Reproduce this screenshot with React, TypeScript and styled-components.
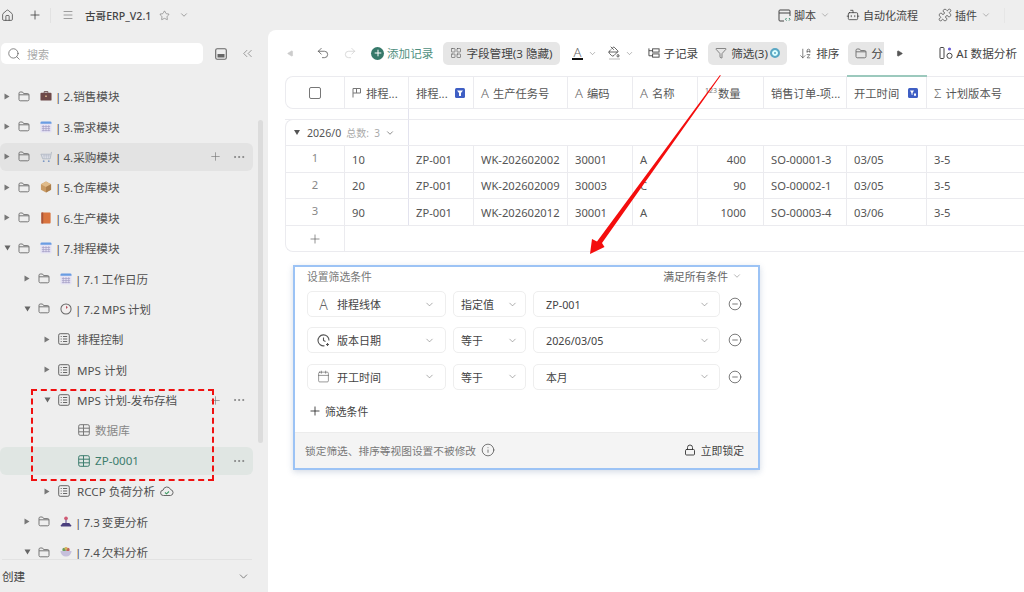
import React, { FC, ReactNode } from 'react'
import styled, { createGlobalStyle } from 'styled-components'
import {
	ArrowDownAZ,
	Bot,
	Calendar,
	ChevronDown,
	ChevronsLeft,
	CircleMinus,
	Ellipsis,
	Funnel,
	House,
	Info,
	LayoutGrid,
	Lock,
	Menu,
	PaintBucket,
	Play,
	Plus,
	Puzzle,
	Redo2,
	Search,
	Star,
	Undo2,
} from 'lucide-react'

const COLUMNS = '59px 64px 65px 94px 65px 65px 66px 83px 80px 120px'

interface TreeItem {
	label: string
	level: number
	kind: 'folder' | 'doc' | 'table'
	caret?: 'right' | 'down'
	emoji?: EmojiName
	state?: 'hover' | 'active' | 'actions'
	muted?: boolean
	cloud?: boolean
}

type EmojiName = 'case' | 'calendar' | 'cart' | 'box' | 'book' | 'clock' | 'joystick' | 'bowl'

const tree: TreeItem[] = [
	{ label: '| 2.销售模块', level: 0, kind: 'folder', caret: 'right', emoji: 'case' },
	{ label: '| 3.需求模块', level: 0, kind: 'folder', caret: 'right', emoji: 'calendar' },
	{ label: '| 4.采购模块', level: 0, kind: 'folder', caret: 'right', emoji: 'cart', state: 'hover' },
	{ label: '| 5.仓库模块', level: 0, kind: 'folder', caret: 'right', emoji: 'box' },
	{ label: '| 6.生产模块', level: 0, kind: 'folder', caret: 'right', emoji: 'book' },
	{ label: '| 7.排程模块', level: 0, kind: 'folder', caret: 'down', emoji: 'calendar' },
	{ label: '| 7.1 工作日历', level: 1, kind: 'folder', caret: 'right', emoji: 'calendar' },
	{ label: '| 7.2 MPS 计划', level: 1, kind: 'folder', caret: 'down', emoji: 'clock' },
	{ label: '排程控制', level: 2, kind: 'doc', caret: 'right' },
	{ label: 'MPS 计划', level: 2, kind: 'doc', caret: 'right' },
	{ label: 'MPS 计划-发布存档', level: 2, kind: 'doc', caret: 'down', state: 'actions' },
	{ label: '数据库', level: 3, kind: 'table', muted: true },
	{ label: 'ZP-0001', level: 3, kind: 'table', state: 'active' },
	{ label: 'RCCP 负荷分析', level: 2, kind: 'doc', caret: 'right', cloud: true },
	{ label: '| 7.3 变更分析', level: 1, kind: 'folder', caret: 'right', emoji: 'joystick' },
	{ label: '| 7.4 欠料分析', level: 1, kind: 'folder', caret: 'down', emoji: 'bowl' },
]

const rows = [
	['1', '10', 'ZP-001', 'WK-202602002', '30001', 'A', '400', 'SO-00001-3', '03/05', '3-5'],
	['2', '20', 'ZP-001', 'WK-202602009', '30003', 'C', '90', 'SO-00002-1', '03/05', '3-5'],
	['3', '90', 'ZP-001', 'WK-202602012', '30001', 'A', '1000', 'SO-00003-4', '03/06', '3-5'],
]

const filters = [
	{ icon: 'text', field: '排程线体', op: '指定值', value: 'ZP-001' },
	{ icon: 'clock', field: '版本日期', op: '等于', value: '2026/03/05' },
	{ icon: 'calendar', field: '开工时间', op: '等于', value: '本月' },
]

const Emoji: FC<{ name: EmojiName }> = ({ name }) => {
	switch (name) {
		case 'case':
			return (
				<svg width="12" height="12" viewBox="0 0 13 13">
					<path d="M4.5 3V1.8h4V3" fill="none" stroke="#5b3d3d" />
					<rect x="0.5" y="3" width="12" height="8.5" rx="1" fill="#6d4848" />
					<rect x="5.5" y="6" width="2" height="1.5" fill="#d9b48a" />
				</svg>
			)
		case 'calendar':
			return (
				<svg width="12" height="12" viewBox="0 0 13 13">
					<rect x="0.5" y="0.5" width="12" height="12" rx="1.5" fill="#e6e3f4" />
					<path d="M0.5 2a1.500 1.500 0 0 1 1.500-1.500h9A1.500 1.500 0 0 1 12.500 2v1h-12z" fill="#6a9de2" />
					<path d="M3.500 4.500v6.500M6.500 4.500v6.500M9.500 4.500v6.500M2 6h9M2 8.200h9M2 10.400h9" stroke="#a5a0c6" strokeWidth="0.8" />
				</svg>
			)
		case 'cart':
			return (
				<svg width="12" height="12" viewBox="0 0 13 13">
					<path d="M12.500 1l-1.500 7.500H3L1 3.500h10.500" fill="#dcdfe6" stroke="#a8b0bd" strokeWidth="0.8" />
					<path d="M3 5.200h8M4.500 3.500v5M7 3.500v5M9.300 3.500v5" stroke="#b6bcc8" strokeWidth="0.6" />
					<circle cx="4" cy="11" r="1" fill="#7d98c4" />
					<circle cx="9.500" cy="11" r="1" fill="#7d98c4" />
				</svg>
			)
		case 'box':
			return (
				<svg width="12" height="12" viewBox="0 0 13 13">
					<path d="M6.500 0.500l5.500 3v6l-5.500 3-5.500-3v-6z" fill="#c99a63" />
					<path d="M1 3.500l5.500 3 5.500-3-5.500-3z" fill="#e0bb8a" />
					<path d="M6.500 6.500v6l5.500-3v-6z" fill="#ad7f4c" />
				</svg>
			)
		case 'book':
			return (
				<svg width="12" height="12" viewBox="0 0 13 13">
					<rect x="1.500" y="0.500" width="10" height="12" rx="1" fill="#d9743f" />
					<rect x="1.500" y="0.500" width="2" height="12" fill="#a9553a" />
				</svg>
			)
		case 'clock':
			return (
				<svg width="12" height="12" viewBox="0 0 13 13">
					<circle cx="6.500" cy="6.500" r="5.500" fill="#f1eeee" stroke="#666" strokeWidth="1.100" />
					<path d="M6.500 6.500V3l2 1.500z" fill="#b9505b" />
				</svg>
			)
		case 'joystick':
			return (
				<svg width="12" height="12" viewBox="0 0 13 13">
					<circle cx="6.500" cy="2.500" r="2" fill="#d15a73" />
					<rect x="5.800" y="4" width="1.400" height="4" fill="#776a9c" />
					<path d="M1 10l2-2.500h7l2 2.500v1.500H1z" fill="#4a3f7d" />
				</svg>
			)
		default:
			return (
				<svg width="12" height="12" viewBox="0 0 13 13">
					<circle cx="4.500" cy="4" r="2" fill="#6a9c5c" />
					<circle cx="8.500" cy="4" r="2" fill="#c0615c" />
					<circle cx="6.500" cy="2.800" r="1.600" fill="#d6b45a" />
					<path d="M0.500 5.500h12a6 6 0 0 1-12 0z" fill="#c6c0dc" />
				</svg>
			)
	}
}

const FolderIcon = () => (
	<svg width="12" height="11" viewBox="0 0 12 11" fill="none" stroke="#777" strokeWidth="1">
		<path d="M1 2.200c0-.7.5-1.200 1.200-1.200h2.300l1.200 1.600h4.100c.7 0 1.200.5 1.200 1.200v4.800c0 .7-.5 1.200-1.200 1.200H2.200c-.7 0-1.200-.5-1.200-1.200z" />
		<path d="M1 3.800h10" />
	</svg>
)

const DocIcon = () => (
	<svg width="12" height="12" viewBox="0 0 12 12" fill="none" stroke="#666" strokeWidth="1">
		<rect x="0.700" y="0.700" width="10.600" height="10.600" rx="1.500" />
		<path d="M5 3.500h4.200M5 6h4.200M5 8.500h4.200M2.700 3.500h1M2.700 6h1M2.700 8.500h1" />
	</svg>
)

const TableIcon: FC<{ color: string }> = ({ color }) => (
	<svg width="12" height="12" viewBox="0 0 12 12" fill="none" stroke={color} strokeWidth="1">
		<rect x="0.700" y="0.700" width="10.600" height="10.600" rx="1.500" />
		<path d="M0.700 4.200h10.600M0.700 7.800h10.600M5.500 0.700v10.600" />
	</svg>
)

const CloudCheckIcon = () => (
	<svg width="14" height="12" viewBox="0 0 14 12" fill="none">
		<path d="M3.500 10.500a2.700 2.700 0 0 1-.4-5.400 3.900 3.900 0 0 1 7.500-.5 3 3 0 0 1 0 5.900z" stroke="#666" />
		<path d="M5 7.500l1.500 1.300L9 6.500" stroke="#3d9a62" strokeWidth="1.100" />
	</svg>
)

const PanelIcon = () => (
	<svg width="12" height="12" viewBox="0 0 12 12">
		<rect x="0.700" y="0.700" width="10.600" height="10.600" rx="1.500" fill="none" stroke="#666" strokeWidth="1.100" />
		<rect x="2.500" y="6" width="7" height="3.500" fill="#666" />
	</svg>
)

const ScriptIcon = () => (
	<svg width="13" height="13" viewBox="0 0 13 13" fill="none" stroke="#444" strokeWidth="1">
		<path d="M6 12H2a1 1 0 0 1-1-1V2a1 1 0 0 1 1-1h9a1 1 0 0 1 1 1v5" />
		<path d="M1 4h11" />
		<path d="M8.500 9l-1 1.300 1 1.300M11 9l1 1.300-1 1.300" stroke="#3d8a6e" />
	</svg>
)

const SubRecordIcon = () => (
	<svg width="12" height="12" viewBox="0 0 13 13" fill="none" stroke="#444" strokeWidth="1">
		<path d="M1 1.500v8h4" />
		<path d="M1 4h4" />
		<rect x="5" y="2" width="7" height="3.500" />
		<rect x="5" y="7.500" width="7" height="3.500" />
	</svg>
)

const AiIcon = () => (
	<svg width="14" height="14" viewBox="0 0 14 14" fill="none" stroke="#444" strokeWidth="1">
		<rect x="1" y="1.500" width="4" height="11" rx="1" />
		<circle cx="10.500" cy="9.800" r="2.600" />
		<circle cx="10.500" cy="3" r="1.600" fill="#6b5fd6" stroke="none" />
	</svg>
)

const FlagIcon = () => (
	<svg width="10" height="11" viewBox="0 0 10 11" fill="none" stroke="#777" strokeWidth="1">
		<path d="M1 10.500V1.500h7.500v4.500H1M4.500 1.500V6" />
	</svg>
)

const ClockSparkIcon = () => (
	<svg width="13" height="13" viewBox="0 0 13 13" fill="none" stroke="#555" strokeWidth="1.100">
		<path d="M7.500 11.800A5.500 5.500 0 1 1 12 6.500" />
		<path d="M6.500 3.500v3l2 1" />
		<path d="M10.500 9v3M9 10.500h3" />
	</svg>
)

const MarkerIcon: FC<{ $time?: boolean }> = ({ $time }) => (
	<svg width="10" height="10" viewBox="0 0 10 10">
		<rect width="10" height="10" rx="1.500" fill="#3f5fc4" />
		{$time ? <path d="M2 2.500h4L4.500 5v2L3.500 6.500V5z M6 5.500h2v2.200H6z" fill="#fff" /> : <path d="M2 2.500h6L6 5v3H4V5z" fill="#fff" />}
	</svg>
)

const Caret: FC<{ dir?: 'right' | 'down' }> = ({ dir }) => (
	<CaretSlot>
		{dir === 'right' && (
			<svg width="6" height="7" viewBox="0 0 6 7">
				<path d="M0.500 0.500L5.500 3.500L0.500 6.500z" fill="#777" />
			</svg>
		)}
		{dir === 'down' && (
			<svg width="7" height="6" viewBox="0 0 7 6">
				<path d="M0.500 0.500H6.500L3.500 5.500z" fill="#666" />
			</svg>
		)}
	</CaretSlot>
)

const TreeRow: FC<{ item: TreeItem }> = ({ item }) => (
	<Row $level={item.level} $state={item.state}>
		<Caret dir={item.caret} />
		<NodeIcon>
			{item.kind === 'folder' && <FolderIcon />}
			{item.kind === 'doc' && <DocIcon />}
			{item.kind === 'table' && <TableIcon color={item.state === 'active' ? '#3d7d6e' : '#777'} />}
		</NodeIcon>
		{item.emoji && (
			<EmojiSlot>
				<Emoji name={item.emoji} />
			</EmojiSlot>
		)}
		<RowLabel $state={item.state} $muted={item.muted} $emoji={!!item.emoji} $table={item.kind === 'table'}>
			{item.label}
		</RowLabel>
		{item.cloud && (
			<CloudSlot>
				<CloudCheckIcon />
			</CloudSlot>
		)}
		{item.state && (
			<RowActions>
				{item.state !== 'active' && <Plus size={13} strokeWidth={1.2} />}
				<Ellipsis size={14} strokeWidth={1.4} />
			</RowActions>
		)}
	</Row>
)

const HeaderCell: FC<{ icon?: ReactNode; marker?: ReactNode; accent?: boolean; children: ReactNode }> = ({
	icon,
	marker,
	accent,
	children,
}) => (
	<HeadCell $accent={accent}>
		{icon}
		<HeadText>{children}</HeadText>
		{marker && <MarkerSlot>{marker}</MarkerSlot>}
	</HeadCell>
)

const Select: FC<{ width: number; pad: number; icon?: ReactNode; children: ReactNode }> = ({ width, pad, icon, children }) => (
	<SelectBox $width={width} $pad={pad}>
		{icon && <SelectIcon>{icon}</SelectIcon>}
		<SelectText>{children}</SelectText>
		<ChevronDown size={11} strokeWidth={1.3} color="#777" />
	</SelectBox>
)

const fieldIcon = (name: string) => {
	if (name === 'text') return <FieldA>A</FieldA>
	if (name === 'clock') return <ClockSparkIcon />
	return <Calendar size={13} strokeWidth={1.1} color="#555" />
}

const App: FC = () => (
	<>
		<GlobalStyle />
		<Page>
			<TopBar>
				<TopLeft>
					<House size={13} strokeWidth={1.4} color="#444" />
					<TopPlus>
						<Plus size={14} strokeWidth={1.3} color="#333" />
					</TopPlus>
					<TopDivider />
					<Menu size={12} strokeWidth={1.2} color="#666" />
					<TopTitle>古哥ERP_V2.1</TopTitle>
					<Star size={11} strokeWidth={1.2} color="#666" />
					<TopChevron>
						<ChevronDown size={10} strokeWidth={1.4} color="#666" />
					</TopChevron>
				</TopLeft>
				<TopRight>
					<TopItem $width={68}>
						<ScriptIcon />
						<span>脚本</span>
						<ChevronDown size={10} strokeWidth={1.2} color="#777" />
					</TopItem>
					<TopItem $width={92}>
						<Bot size={14} strokeWidth={1.3} color="#333" />
						<span>自动化流程</span>
					</TopItem>
					<TopItem $width={66}>
						<Puzzle size={14} strokeWidth={1.1} color="#333" />
						<span>插件</span>
						<ChevronDown size={10} strokeWidth={1.2} color="#777" />
					</TopItem>
					<TopEndRule />
				</TopRight>
			</TopBar>
			<Body>
				<Sidebar>
					<SearchRow>
						<SearchBox>
							<Search size={14} strokeWidth={1.2} color="#555" />
							<SearchHint>搜索</SearchHint>
						</SearchBox>
						<SearchTool $ml={12}>
							<PanelIcon />
						</SearchTool>
						<SearchTool $ml={13}>
							<ChevronsLeft size={15} strokeWidth={1} color="#666" />
						</SearchTool>
					</SearchRow>
					<Tree>
						{tree.map((item) => (
							<TreeRow key={item.label} item={item} />
						))}
					</Tree>
					<SideFooter>
						<span>创建</span>
						<ChevronDown size={13} strokeWidth={1.3} color="#555" />
					</SideFooter>
					<ScrollThumb />
				</Sidebar>
				<Main>
					<Toolbar>
						<ToolSlot $ml={19}>
							<Play size={7} fill="#ccc" color="#ccc" style={{ transform: 'rotate(180deg)' }} />
						</ToolSlot>
						<ToolSlot $ml={22}>
							<Undo2 size={14} strokeWidth={1.2} color="#444" />
						</ToolSlot>
						<ToolSlot $ml={13}>
							<Redo2 size={14} strokeWidth={1.2} color="#ccc" />
						</ToolSlot>
						<AddRecord>
							<AddDot>
								<Plus size={10} strokeWidth={2.4} color="#fff" />
							</AddDot>
							添加记录
						</AddRecord>
						<ToolButton $active $ml={10} $width={117}>
							<LayoutGrid size={12} strokeWidth={1.2} color="#555" />
							字段管理(3 隐藏)
						</ToolButton>
						<ColorTool $ml={11}>
							<ColorGlyph>
								<TypeA>A</TypeA>
								<ColorBar $color="#111" />
							</ColorGlyph>
							<ChevronDown size={9} strokeWidth={1.4} color="#777" />
						</ColorTool>
						<ColorTool $ml={11}>
							<ColorGlyph>
								<PaintBucket size={12} strokeWidth={1.5} color="#333" />
								<ColorBar $color="#ddd" />
							</ColorGlyph>
							<ChevronDown size={9} strokeWidth={1.4} color="#777" />
						</ColorTool>
						<SubRecord>
							<SubRecordIcon />
							子记录
						</SubRecord>
						<ToolButton $active $ml={10} $width={79}>
							<Funnel size={12} strokeWidth={1.2} color="#444" />
							<span>筛选(3)</span>
							<FilterBadge />
						</ToolButton>
						<ToolButton $ml={5} $width={54}>
							<ArrowDownAZ size={13} strokeWidth={1.2} color="#444" />
							排序
						</ToolButton>
						<ToolButton $active $ml={2} $width={36} $clip>
							<FolderIcon />
							分
						</ToolButton>
						<ToolSlot $ml={12}>
							<Play size={7} fill="#555" color="#555" />
						</ToolSlot>
						<AiButton>
							<AiIcon />
							AI 数据分析
						</AiButton>
					</Toolbar>

					<TableWrap>
						<HeadRow>
							<CheckCell>
								<CheckBox />
							</CheckCell>
							<HeaderCell icon={<FlagIcon />}>排程...</HeaderCell>
							<HeaderCell marker={<MarkerIcon />}>排程...</HeaderCell>
							<HeaderCell icon={<TypeA>A</TypeA>}>生产任务号</HeaderCell>
							<HeaderCell icon={<TypeA>A</TypeA>}>编码</HeaderCell>
							<HeaderCell icon={<TypeA>A</TypeA>}>名称</HeaderCell>
							<HeaderCell icon={<NumberMark>123</NumberMark>}>数量</HeaderCell>
							<HeaderCell>销售订单-项...</HeaderCell>
							<HeaderCell accent marker={<MarkerIcon $time />}>
								开工时间
							</HeaderCell>
							<HeaderCell icon={<TypeA>Σ</TypeA>}>计划版本号</HeaderCell>
						</HeadRow>
						<GapRow />
						<GroupRow>
							<GroupCell>
								<svg width="6" height="5" viewBox="0 0 6 5">
									<path d="M0 0H6L3 5z" fill="#555" />
								</svg>
								<GroupDate>2026/0</GroupDate>
								<GroupCount>总数:&nbsp;&nbsp;3</GroupCount>
								<ChevronDown size={10} strokeWidth={1.6} color="#555" />
							</GroupCell>
						</GroupRow>
						{rows.map((row) => (
							<DataRow key={row[0]}>
								{row.map((value, i) => (
									<DataCell key={i} $num={i === 0} $right={i === 6} $frozen={i === 1}>
										{value}
									</DataCell>
								))}
							</DataRow>
						))}
						<AddRow>
							<AddRowCell>
								<Plus size={14} strokeWidth={1.1} color="#555" />
							</AddRowCell>
						</AddRow>
					</TableWrap>

					<FilterPanel>
						<PanelHead>
							<span>设置筛选条件</span>
							<PanelMode>
								满足所有条件
								<ChevronDown size={10} strokeWidth={1.3} color="#777" />
							</PanelMode>
						</PanelHead>
						<FilterList>
							{filters.map((f) => (
								<FilterRow key={f.field}>
									<Select width={139} pad={10} icon={fieldIcon(f.icon)}>
										{f.field}
									</Select>
									<Select width={73} pad={7}>
										{f.op}
									</Select>
									<ValueSelect $width={187} $pad={9}>
										<SelectText>{f.value}</SelectText>
										<ChevronDown size={11} strokeWidth={1.3} color="#777" />
									</ValueSelect>
									<RemoveSlot>
										<CircleMinus size={14} strokeWidth={1.2} color="#444" />
									</RemoveSlot>
								</FilterRow>
							))}
						</FilterList>
						<AddFilter>
							<Plus size={14} strokeWidth={1.4} color="#222" />
							筛选条件
						</AddFilter>
						<PanelFoot>
							<FootHint>
								锁定筛选、排序等视图设置不被修改
								<Info size={14} strokeWidth={1.2} color="#444" />
							</FootHint>
							<LockNow>
								<Lock size={12} strokeWidth={1.8} color="#333" />
								立即锁定
							</LockNow>
						</PanelFoot>
					</FilterPanel>
				</Main>
			</Body>

			<DashedMark />
			<ArrowOverlay width="1024" height="592" viewBox="0 0 1024 592">
				<path d="M720 75L720.800 75.500L602 243L604.500 247L590 254L592 239L597 241.500z" fill="#f40d0d" />
			</ArrowOverlay>
		</Page>
	</>
)

export default App

const GlobalStyle = createGlobalStyle`
	html,
	body {
		margin: 0;
		padding: 0;
		background: #eeeeee;
	}
	body {
		font-family: 'Noto Sans', 'Noto Sans CJK SC', sans-serif;
		font-size: 11.6px;
		color: #555;
	}
	* {
		box-sizing: border-box;
	}
`

const Page = styled.div`
	position: relative;
	width: 1024px;
	height: 592px;
	overflow: hidden;
	display: flex;
	flex-direction: column;
	background: #eeeeee;
`

const TopBar = styled.div`
	height: 30px;
	flex: none;
	display: flex;
	align-items: center;
	justify-content: space-between;
`

const TopLeft = styled.div`
	display: flex;
	align-items: center;
	padding-left: 1px;
`

const TopPlus = styled.span`
	display: flex;
	margin-left: 14px;
`

const TopDivider = styled.span`
	width: 1px;
	height: 15px;
	background: #e2e2e2;
	margin: 0 11px 0 8px;
`

const TopTitle = styled.span`
	margin: 0 8px 0 11px;
	color: #444;
	font-weight: 500;
	font-size: 10.6px;
`

const TopChevron = styled.span`
	display: flex;
	margin-left: 9px;
`

const TopRight = styled.div`
	display: flex;
	align-items: center;
	padding-right: 19px;
`

const TopItem = styled.div<{ $width: number }>`
	display: flex;
	align-items: center;
	gap: 3px;
	width: ${(p) => p.$width}px;
	color: #444;
	font-size: 11px;
	svg:last-child:not(:first-child) {
		margin-left: 1px;
	}
`

const TopEndRule = styled.span`
	width: 1px;
	height: 15px;
	background: #e6e6e6;
`

const Body = styled.div`
	flex: 1;
	display: flex;
	min-height: 0;
`

const Sidebar = styled.aside`
	position: relative;
	width: 268px;
	flex: none;
	display: flex;
	flex-direction: column;
`

const SearchRow = styled.div`
	display: flex;
	align-items: center;
	height: 21px;
	margin-top: 13px;
	padding-left: 1px;
`

const SearchBox = styled.div`
	width: 202px;
	height: 21px;
	background: #fff;
	border-radius: 5px;
	display: flex;
	align-items: center;
	gap: 6px;
	padding-left: 6px;
`

const SearchHint = styled.span`
	color: #aaa;
	font-size: 11px;
`

const SearchTool = styled.span<{ $ml: number }>`
	display: flex;
	margin-left: ${(p) => p.$ml}px;
`

const Tree = styled.div`
	flex: 1;
	min-height: 0;
	overflow: hidden;
	padding-top: 18px;
	display: flex;
	flex-direction: column;
	gap: 2px;
`

const stateBg = (state?: string) => {
	if (state === 'hover') return '#e3e3e3'
	if (state === 'active') return '#e0e6e3'
	return 'transparent'
}

const Row = styled.div<{ $level: number; $state?: string }>`
	flex: none;
	width: 253px;
	height: 28.4px;
	border-radius: 6px;
	display: flex;
	align-items: center;
	padding-left: ${(p) => 4 + p.$level * 20}px;
	padding-right: 7px;
	background: ${(p) => stateBg(p.$state)};
`

const CaretSlot = styled.span`
	width: 8px;
	flex: none;
	display: flex;
	align-items: center;
`

const NodeIcon = styled.span`
	margin-left: 6px;
	width: 12px;
	flex: none;
	display: flex;
`

const EmojiSlot = styled.span`
	margin-left: 10px;
	display: flex;
	flex: none;
`

const labelGap = (p: { $emoji?: boolean; $table?: boolean }) => {
	if (p.$emoji) return 3
	return p.$table ? 5 : 7
}

const RowLabel = styled.span<{ $state?: string; $muted?: boolean; $emoji?: boolean; $table?: boolean }>`
	margin-left: ${labelGap}px;
	white-space: nowrap;
	word-spacing: ${(p) => (p.$emoji ? '-1px' : '0')};
	color: ${(p) => (p.$state === 'active' ? '#3d7d6e' : p.$muted ? '#888' : '#505050')};
`

const CloudSlot = styled.span`
	display: flex;
	margin-left: 5px;
`

const RowActions = styled.span`
	margin-left: auto;
	display: flex;
	align-items: center;
	gap: 10px;
	color: #777;
`

const SideFooter = styled.div`
	flex: none;
	height: 33px;
	margin: 0 16px 0 2px;
	border-top: 1px solid #e2e2e2;
	display: flex;
	align-items: center;
	justify-content: space-between;
	padding-right: 2px;
	color: #444;
`

const ScrollThumb = styled.span`
	position: absolute;
	left: 258px;
	top: 90px;
	width: 5px;
	height: 323px;
	border-radius: 3px;
	background: #dcdcdc;
`

const Main = styled.main`
	position: relative;
	flex: 1;
	min-width: 0;
	background: #fff;
	border-top-left-radius: 8px;
	overflow: hidden;
`

const Toolbar = styled.div`
	height: 46px;
	display: flex;
	align-items: center;
	white-space: nowrap;
	color: #444;
`

const ToolSlot = styled.span<{ $ml: number }>`
	display: flex;
	margin-left: ${(p) => p.$ml}px;
`

const AddRecord = styled.span`
	display: flex;
	align-items: center;
	gap: 3px;
	margin-left: 14px;
	color: #4f8f7e;
`

const AddDot = styled.span`
	width: 13px;
	height: 13px;
	border-radius: 50%;
	background: #36796a;
	display: flex;
	align-items: center;
	justify-content: center;
`

const ToolButton = styled.span<{ $active?: boolean; $ml: number; $width: number; $clip?: boolean }>`
	flex: none;
	width: ${(p) => p.$width}px;
	height: 23px;
	margin-left: ${(p) => p.$ml}px;
	padding-left: 7px;
	display: flex;
	align-items: center;
	gap: 4px;
	overflow: hidden;
	border-radius: ${(p) => (p.$clip ? '5px 0 0 5px' : '5px')};
	background: ${(p) => (p.$active ? '#e6e6e6' : 'transparent')};
`

const SubRecord = styled.span`
	display: flex;
	align-items: center;
	gap: 3px;
	margin-left: 14px;
`

const FilterBadge = styled.span`
	width: 10px;
	height: 10px;
	border-radius: 50%;
	background: #5aa7c4;
	border: 2.500px solid #5aa7c4;
	box-shadow: inset 0 0 0 2px #dff;
	margin-left: -2px;
`

const ColorTool = styled.span<{ $ml: number }>`
	display: flex;
	align-items: center;
	gap: 5px;
	margin-left: ${(p) => p.$ml}px;
`

const ColorGlyph = styled.span`
	display: flex;
	flex-direction: column;
	align-items: center;
	width: 12px;
	line-height: 11px;
	font-size: 13px;
`

const ColorBar = styled.span<{ $color: string }>`
	width: 11px;
	height: 2px;
	background: ${(p) => p.$color};
`

const AiButton = styled.span`
	display: flex;
	align-items: center;
	gap: 3px;
	margin-left: auto;
	margin-right: 7px;
`

const TypeA = styled.span`
	font-weight: 300;
	color: #666;
	font-size: 13px;
`

const FieldA = styled(TypeA)`
	font-size: 14px;
`

const NumberMark = styled.span`
	font-size: 7px;
	color: #777;
	line-height: 1;
	margin: 0 -3px 4px 0;
`

const TableWrap = styled.div`
	margin-left: 17px;
	width: 739px;
`

const HeadRow = styled.div`
	display: grid;
	grid-template-columns: ${COLUMNS};
	height: 33px;
	border-top: 1px solid #ebebef;
	border-bottom: 1px solid #ebebef;
	border-left: 1px solid #ebebef;
	border-top-left-radius: 8px;
	border-bottom-left-radius: 8px;
`

const CheckCell = styled.div`
	display: flex;
	align-items: center;
	justify-content: center;
	border-right: 1px solid #ebebef;
`

const CheckBox = styled.span`
	width: 12px;
	height: 12px;
	border: 1px solid #777;
	border-radius: 2px;
`

const HeadCell = styled.div<{ $accent?: boolean }>`
	position: relative;
	display: flex;
	align-items: center;
	gap: 4px;
	padding: 0 5px 0 7px;
	color: #555;
	font-size: 11.3px;
	white-space: nowrap;
	border-right: 1px solid #ebebef;
	box-shadow: ${(p) => (p.$accent ? '0 -2px 0 0 #9cc9bd' : 'none')};
`

const HeadText = styled.span`
	flex: none;
`

const MarkerSlot = styled.span`
	display: flex;
	margin-left: auto;
	margin-right: 3px;
`

const GapRow = styled.div`
	width: 124px;
	height: 10px;
	border-right: 1px solid #e3e3ee;
`

const GroupRow = styled.div`
	height: 27px;
	border-top: 1px solid #ebebef;
	border-bottom: 1px solid #ebebef;
	display: flex;
`

const GroupCell = styled.div`
	width: 124px;
	height: 26px;
	margin-top: -1px;
	padding-left: 8px;
	display: flex;
	align-items: center;
	white-space: nowrap;
	border-top: 1px solid #ebebef;
	border-left: 1px solid #ebebef;
	border-right: 1px solid #e3e3ee;
	border-top-left-radius: 8px;
`

const GroupDate = styled.span`
	margin-left: 7px;
	font-size: 10.6px;
	flex: none;
`

const GroupCount = styled.span`
	color: #aaa;
	font-size: 10px;
	margin: 0 5px 0 5px;
`

const DataRow = styled.div`
	display: grid;
	grid-template-columns: ${COLUMNS};
	height: 26.600px;
	border-left: 1px solid #ebebef;
	border-bottom: 1px solid #ebebef;
`

const DataCell = styled.div<{ $num?: boolean; $right?: boolean; $frozen?: boolean }>`
	display: flex;
	align-items: center;
	justify-content: ${(p) => (p.$num ? 'center' : p.$right ? 'flex-end' : 'flex-start')};
	padding: ${(p) => (p.$right ? '1px 17px 0 0' : p.$num ? '0 0 2px' : '1px 0 0 7px')};
	color: ${(p) => (p.$num ? '#888' : '#555')};
	font-size: 11.2px;
	border-right: 1px solid ${(p) => (p.$frozen ? '#e3e3ee' : '#ebebef')};
	white-space: nowrap;
	overflow: hidden;
`

const AddRow = styled.div`
	height: 26.600px;
	border-left: 1px solid #ebebef;
	border-bottom: 1px solid #ebebef;
	border-bottom-left-radius: 8px;
`

const AddRowCell = styled.div`
	width: 59px;
	height: 100%;
	display: flex;
	align-items: center;
	justify-content: center;
	border-right: 1px solid #ebebef;
`

const FilterPanel = styled.section`
	position: absolute;
	left: 25px;
	top: 235px;
	width: 467px;
	height: 205px;
	display: flex;
	flex-direction: column;
	background: #fff;
	border: 2px solid #9cc3f5;
	box-shadow: 0 2px 6px rgba(60, 90, 140, 0.22);
	font-size: 10.8px;
`

const PanelHead = styled.div`
	flex: none;
	height: 24px;
	padding: 0 16px 6px 12px;
	display: flex;
	align-items: center;
	justify-content: space-between;
	color: #777;
`

const PanelMode = styled.span`
	display: flex;
	align-items: center;
	gap: 4px;
	color: #666;
`

const FilterList = styled.div`
	display: flex;
	flex-direction: column;
	gap: 10.300px;
	padding-left: 12px;
`

const FilterRow = styled.div`
	display: flex;
	align-items: center;
	gap: 7px;
	height: 26px;
`

const SelectBox = styled.div<{ $width: number; $pad: number }>`
	flex: none;
	width: ${(p) => p.$width}px;
	height: 26px;
	border: 1px solid #eeeeee;
	border-radius: 5px;
	padding: 0 ${(p) => p.$pad}px 0 7px;
	display: flex;
	align-items: center;
	color: #444;
	font-size: 11px;
`

const SelectIcon = styled.span`
	width: 15px;
	margin: 0 6px 0 1px;
	display: flex;
	justify-content: center;
`

const SelectText = styled.span`
	flex: 1;
`

const ValueSelect = styled(SelectBox)`
	padding-left: 12px;
	font-size: 10.800px;
`

const RemoveSlot = styled.span`
	display: flex;
	margin-left: 1px;
`

const AddFilter = styled.div`
	height: 42px;
	flex: none;
	padding-left: 13px;
	display: flex;
	align-items: center;
	gap: 3px;
	color: #444;
`

const PanelFoot = styled.div`
	flex: 1;
	background: #f4f4f4;
	border-top: 1px solid #ececec;
	display: flex;
	align-items: center;
	justify-content: space-between;
	padding: 0 14px 0 10px;
`

const FootHint = styled.span`
	display: flex;
	align-items: center;
	gap: 5px;
	color: #777;
	font-size: 10.7px;
`

const LockNow = styled.span`
	display: flex;
	align-items: center;
	gap: 5px;
	color: #444;
`

const DashedMark = styled.div`
	position: absolute;
	left: 31px;
	top: 389px;
	width: 183px;
	height: 92px;
	border: 2px dashed #f01010;
	pointer-events: none;
`

const ArrowOverlay = styled.svg`
	position: absolute;
	inset: 0;
	pointer-events: none;
`
